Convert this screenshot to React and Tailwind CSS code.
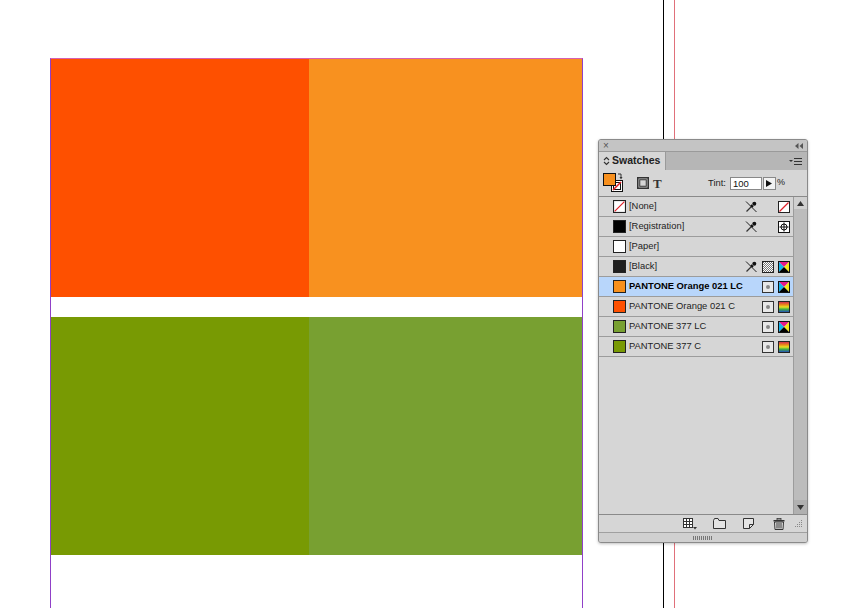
import React from "react";

const font = { fontFamily: '"Liberation Sans", Arial, sans-serif' };

const NoDrop = () => (
  <svg width="13" height="13" viewBox="0 0 13 13">
    <line x1="1" y1="1.5" x2="11.5" y2="12" stroke="#222" strokeWidth="1" />
    <path d="M1.5 11.5 L7 6" stroke="#333" strokeWidth="1.2" />
    <path d="M6 5 L8 7" stroke="#111" strokeWidth="2" />
    <circle cx="9.3" cy="3.7" r="2" fill="#111" />
  </svg>
);

const NoneIcon = ({ size = 12 }) => (
  <svg width={size} height={size} viewBox="0 0 12 12">
    <rect x="0.5" y="0.5" width="11" height="11" fill="#fff" stroke="#222" />
    <line x1="1.5" y1="10.5" x2="10.5" y2="1.5" stroke="#e0202a" strokeWidth="1.2" />
  </svg>
);

const RegIcon = () => (
  <svg width="12" height="12" viewBox="0 0 12 12">
    <rect x="0.5" y="0.5" width="11" height="11" fill="#fff" stroke="#111" />
    <circle cx="6" cy="6" r="3" fill="none" stroke="#111" strokeWidth="1" />
    <line x1="6" y1="1.5" x2="6" y2="10.5" stroke="#111" />
    <line x1="1.5" y1="6" x2="10.5" y2="6" stroke="#111" />
  </svg>
);

const Checker = () => (
  <svg width="12" height="12" viewBox="0 0 12 12">
    <defs>
      <pattern id="chk" width="2" height="2" patternUnits="userSpaceOnUse">
        <rect width="2" height="2" fill="#fff" />
        <rect width="1" height="1" fill="#777" />
        <rect x="1" y="1" width="1" height="1" fill="#777" />
      </pattern>
    </defs>
    <rect x="0.5" y="0.5" width="11" height="11" fill="url(#chk)" stroke="#222" />
  </svg>
);

const Cmyk = () => (
  <svg width="12" height="12" viewBox="0 0 12 12">
    <polygon points="1,1 11,1 6,6" fill="#e5198a" />
    <polygon points="1,1 1,11 6,6" fill="#16b3e8" />
    <polygon points="11,1 11,11 6,6" fill="#f4ea1a" />
    <polygon points="1,11 11,11 6,6" fill="#000" />
    <rect x="0.5" y="0.5" width="11" height="11" fill="none" stroke="#111" />
  </svg>
);

const Lab = () => (
  <svg width="12" height="12" viewBox="0 0 12 12">
    <defs>
      <linearGradient id="lab" x1="0" y1="0" x2="0" y2="1">
        <stop offset="0" stopColor="#d0205a" />
        <stop offset="0.3" stopColor="#e88a1a" />
        <stop offset="0.5" stopColor="#e8e020" />
        <stop offset="0.7" stopColor="#40b040" />
        <stop offset="1" stopColor="#2040d0" />
      </linearGradient>
    </defs>
    <rect x="0.5" y="0.5" width="11" height="11" fill="url(#lab)" stroke="#222" />
  </svg>
);

const Spot = () => (
  <svg width="12" height="12" viewBox="0 0 12 12">
    <rect x="0.5" y="0.5" width="11" height="11" fill="#e8e8e8" stroke="#333" />
    <circle cx="6" cy="6" r="2" fill="#888" />
  </svg>
);

const icon = (k) => {
  if (k === "nodrop") return <NoDrop />;
  if (k === "none") return <NoneIcon />;
  if (k === "reg") return <RegIcon />;
  if (k === "checker") return <Checker />;
  if (k === "cmyk") return <Cmyk />;
  if (k === "lab") return <Lab />;
  if (k === "spot") return <Spot />;
  return null;
};

const rows = [
  { name: "[None]", swatch: "none", icons: ["nodrop", null, "none"] },
  { name: "[Registration]", swatch: "#000000", icons: ["nodrop", null, "reg"] },
  { name: "[Paper]", swatch: "#ffffff", icons: [null, null, null] },
  { name: "[Black]", swatch: "#1f1f1f", icons: ["nodrop", "checker", "cmyk"] },
  { name: "PANTONE Orange 021 LC", swatch: "#f7901e", sel: true, icons: [null, "spot", "cmyk"] },
  { name: "PANTONE Orange 021 C", swatch: "#fe5000", icons: [null, "spot", "lab"] },
  { name: "PANTONE 377 LC", swatch: "#78a031", icons: [null, "spot", "cmyk"] },
  { name: "PANTONE 377 C", swatch: "#799a05", icons: [null, "spot", "lab"] },
];

const SwatchRow = ({ row }) => (
  <div
    className={`flex items-center h-[20px] border-b border-[#9c9c9c] pl-[14px] pr-[3px] ${
      row.sel ? "bg-[#b8d6fb]" : ""
    }`}
  >
    {row.swatch === "none" ? (
      <NoneIcon size={13} />
    ) : (
      <div className="w-[13px] h-[13px] border border-[#222]" style={{ background: row.swatch }} />
    )}
    <span
      className={`ml-[3px] flex-1 text-[9.4px] ${row.sel ? "font-bold text-black" : "text-[#222]"} ${
        row.name.startsWith("[") ? "text-[#3a2a3a]" : ""
      }`}
    >
      {row.name}
    </span>
    <div className="flex items-center gap-[3px]">
      {row.icons.map((k, i) => (
        <div key={i} className="w-[13px] h-[13px] flex items-center justify-center">
          {icon(k)}
        </div>
      ))}
    </div>
  </div>
);

const Panel = () => (
  <div
    className="absolute left-[598px] top-[139px] w-[210px] h-[404px] rounded-[3px] border border-[#8a8a8a] bg-[#d6d6d6] flex flex-col overflow-hidden shadow-[0_1px_3px_rgba(0,0,0,0.25)]"
    style={font}
  >
    {/* title bar */}
    <div className="h-[11px] bg-[#c4c4c4] flex items-center justify-between px-[4px] text-[#555]">
      <span className="text-[10px] leading-none">×</span>
      <svg width="8" height="6" viewBox="0 0 8 6">
        <polygon points="0,3 3.5,0 3.5,6" fill="#555" />
        <polygon points="4.5,3 8,0 8,6" fill="#555" />
      </svg>
    </div>
    {/* tabs */}
    <div className="h-[19px] bg-[#b6b6b6] flex items-stretch border-t border-[#9a9a9a]">
      <div className="w-[67px] bg-[#d6d6d6] border-r border-[#9a9a9a] flex items-center pl-[4px] gap-[2px] text-[#222]">
        <svg width="7" height="10" viewBox="0 0 7 10">
          <path d="M1 4 L3.5 1.5 L6 4 M1 6 L3.5 8.5 L6 6" fill="none" stroke="#333" strokeWidth="1.1" />
        </svg>
        <span className="text-[10.5px] font-bold">Swatches</span>
      </div>
      <div className="flex-1 flex items-center justify-end pr-[4px]">
        <svg width="14" height="9" viewBox="0 0 14 9">
          <polygon points="0,3 4,3 2,5" fill="#333" />
          <rect x="5" y="1" width="8" height="1" fill="#333" />
          <rect x="5" y="4" width="8" height="1" fill="#333" />
          <rect x="5" y="7" width="8" height="1" fill="#333" />
        </svg>
      </div>
    </div>
    {/* tool row */}
    <div className="h-[27px] flex items-center pl-[4px] pr-[22px] border-b border-[#8a8a8a]">
      <svg width="22" height="22" viewBox="0 0 22 22">
        <rect x="8.5" y="8.5" width="11" height="11" fill="#fff" stroke="#111" />
        <rect x="10.5" y="10.5" width="7" height="7" fill="#fff" stroke="#111" />
        <line x1="10" y1="18" x2="18" y2="10" stroke="#e0202a" strokeWidth="1.6" />
        <rect x="0.5" y="1.5" width="12" height="12" fill="#f7901e" stroke="#111" />
        <path d="M15 2 H18 V6" fill="none" stroke="#333" strokeWidth="1" />
        <polygon points="16.5,5 19.5,5 18,7.5" fill="#333" />
      </svg>
      <svg width="12" height="12" viewBox="0 0 12 12" className="ml-[12px]">
        <rect x="0.75" y="0.75" width="10.5" height="10.5" fill="#c8c8c8" stroke="#333" strokeWidth="1.5" />
        <rect x="2.75" y="2.75" width="6.5" height="6.5" fill="#d6d6d6" stroke="#333" strokeWidth="1" />
      </svg>
      <span className="ml-[4px] text-[13px] font-bold leading-none text-[#333]" style={{ fontFamily: '"Liberation Serif", serif' }}>
        T
      </span>
      <div className="flex-1" />
      <span className="text-[9.4px] text-[#222]">Tint:</span>
      <div className="ml-[4px] w-[32px] h-[13px] bg-white border border-[#888] text-[9.5px] leading-[11px] pl-[2px] text-[#111]">
        100
      </div>
      <div className="ml-[1px] w-[13px] h-[13px] bg-[#f2f2f2] border border-[#888] flex items-center justify-center">
        <svg width="6" height="7" viewBox="0 0 6 7">
          <polygon points="0,0 6,3.5 0,7" fill="#111" />
        </svg>
      </div>
      <span className="ml-[1px] text-[9px] text-[#222]">%</span>
    </div>
    {/* list + scrollbar */}
    <div className="flex-1 flex min-h-0">
      <div className="flex-1 flex flex-col">
        {rows.map((r) => (
          <SwatchRow key={r.name} row={r} />
        ))}
      </div>
      <div className="w-[14px] bg-[#bcbcbc] border-l border-[#9c9c9c] flex flex-col justify-between">
        <div className="h-[12px] flex items-center justify-center bg-[#d0d0d0]">
          <svg width="7" height="5" viewBox="0 0 7 5">
            <polygon points="0,5 3.5,0 7,5" fill="#333" />
          </svg>
        </div>
        <div className="h-[14px] flex items-center justify-center bg-[#b0b0b0]">
          <svg width="7" height="5" viewBox="0 0 7 5">
            <polygon points="0,0 7,0 3.5,5" fill="#333" />
          </svg>
        </div>
      </div>
    </div>
    {/* bottom toolbar */}
    <div className="h-[18px] border-t border-[#8a8a8a] flex items-center justify-end pr-[4px] text-[#333]">
      <svg width="14" height="12" viewBox="0 0 14 12" className="mr-[16px]">
        <rect x="0.5" y="0.5" width="9" height="9" fill="#fff" stroke="#333" />
        <path d="M3.5 0.5 V9.5 M6.5 0.5 V9.5 M0.5 3.5 H9.5 M0.5 6.5 H9.5" stroke="#333" />
        <polygon points="10,9 14,9 12,11.5" fill="#333" />
      </svg>
      <svg width="13" height="11" viewBox="0 0 13 11" className="mr-[17px]">
        <path d="M0.5 2.5 V10.5 H12.5 V2.5 H6 L5 0.5 H1.5 Z" fill="#e4e4e4" stroke="#333" />
      </svg>
      <svg width="11" height="11" viewBox="0 0 11 11" className="mr-[19px]">
        <path d="M0.5 0.5 H10.5 V6.5 L6.5 10.5 H0.5 Z" fill="#e4e4e4" stroke="#333" />
        <path d="M6.5 10.5 V6.5 H10.5" fill="none" stroke="#333" />
      </svg>
      <svg width="12" height="12" viewBox="0 0 12 12" className="mr-[10px]">
        <rect x="4" y="0.5" width="4" height="1.5" fill="none" stroke="#333" strokeWidth="0.8" />
        <rect x="0.5" y="2" width="11" height="1.5" fill="#333" />
        <path d="M1.5 4 H10.5 L10 11.5 H2 Z" fill="#e4e4e4" stroke="#333" />
        <path d="M4 5 V10.5 M6 5 V10.5 M8 5 V10.5" stroke="#333" />
      </svg>
      <svg width="8" height="8" viewBox="0 0 8 8">
        <g fill="#888">
          <rect x="6" y="0" width="1" height="1" />
          <rect x="4" y="2" width="1" height="1" />
          <rect x="6" y="2" width="1" height="1" />
          <rect x="2" y="4" width="1" height="1" />
          <rect x="4" y="4" width="1" height="1" />
          <rect x="6" y="4" width="1" height="1" />
          <rect x="0" y="6" width="1" height="1" />
          <rect x="2" y="6" width="1" height="1" />
          <rect x="4" y="6" width="1" height="1" />
          <rect x="6" y="6" width="1" height="1" />
        </g>
      </svg>
    </div>
    {/* grip strip */}
    <div className="h-[10px] border-t border-[#a0a0a0] bg-[#d0d0d0] flex items-center justify-center">
      <svg width="20" height="4" viewBox="0 0 20 4">
        <g fill="#777">
          {[0, 2, 4, 6, 8, 10, 12, 14, 16, 18].map((x) => (
            <rect key={x} x={x} y="0" width="1" height="4" />
          ))}
        </g>
      </svg>
    </div>
  </div>
);

export default function App() {
  return (
    <div className="relative w-[863px] h-[608px] bg-white overflow-hidden">
      {/* guides */}
      <div className="absolute left-[663px] top-0 w-px h-full bg-black" />
      <div className="absolute left-[674px] top-0 w-px h-full bg-[#e0707a]" />

      {/* document page */}
      <div className="ml-[50px] pt-[58px]">
        <div className="w-[533px] h-[560px] border-l border-r border-t border-l-[#9040c8] border-r-[#9040c8] border-t-[#d860b0]">
          <div className="grid grid-cols-[258px_273px] grid-rows-[238px_238px] gap-y-[20px]">
            <div className="bg-[#fe5000]" />
            <div className="bg-[#f8911f]" />
            <div className="bg-[#789a03]" />
            <div className="bg-[#78a031]" />
          </div>
        </div>
      </div>

      <Panel />
    </div>
  );
}
